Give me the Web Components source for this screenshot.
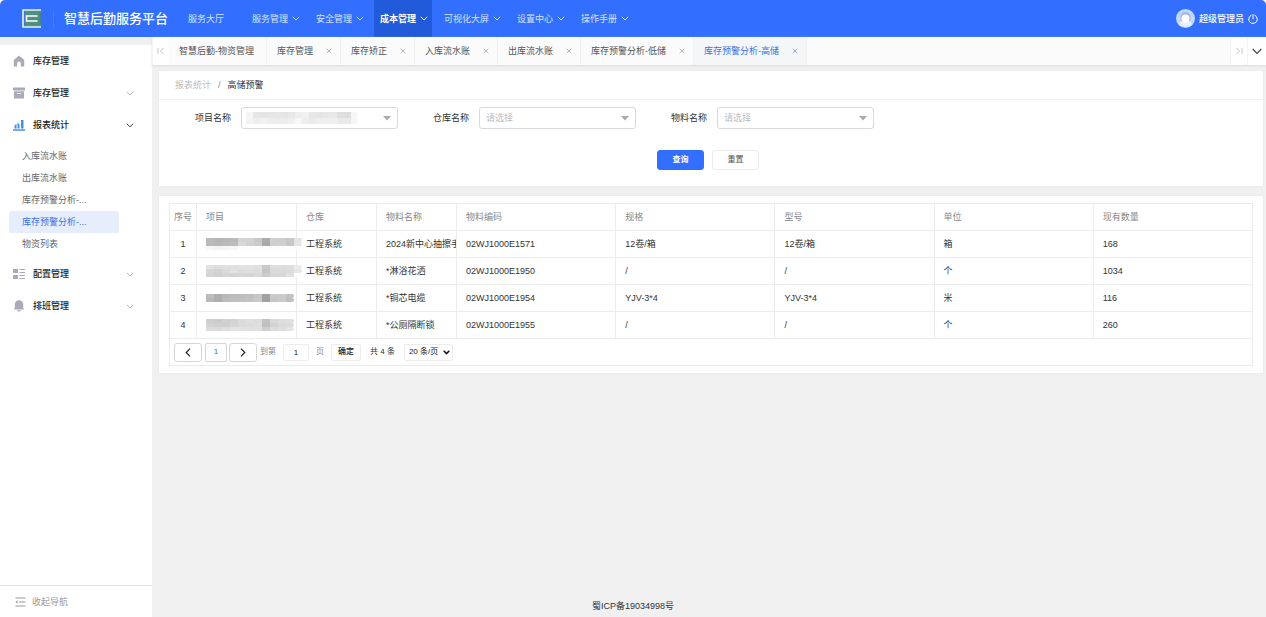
<!DOCTYPE html>
<html lang="zh-CN">
<head>
<meta charset="utf-8">
<title>智慧后勤服务平台</title>
<style>
    html, body {
        height: 100%;
    }

    body {
        margin: 0;
        background: #fff;
        color: #333;
        font: 9px/14px "Liberation Sans", "Noto Sans CJK SC", sans-serif;
    }
</style>
</head>
<body>

<app-shell>
    <app-header slot="header">
        <nav-item>服务大厅</nav-item>
        <nav-item arrow>服务管理</nav-item>
        <nav-item arrow>安全管理</nav-item>
        <nav-item arrow active>成本管理</nav-item>
        <nav-item arrow>可视化大屏</nav-item>
        <nav-item arrow>设置中心</nav-item>
        <nav-item arrow>操作手册</nav-item>
    </app-header>

    <side-nav slot="side">
        <side-item icon="home">库存管理</side-item>
        <side-item icon="box" arrow>库存管理</side-item>
        <side-item icon="chart" arrow open>报表统计
            <side-link slot="children">入库流水账</side-link>
            <side-link slot="children">出库流水账</side-link>
            <side-link slot="children">库存预警分析-...</side-link>
            <side-link slot="children" active>库存预警分析-...</side-link>
            <side-link slot="children">物资列表</side-link>
        </side-item>
        <side-item icon="grid" arrow>配置管理</side-item>
        <side-item icon="bell" arrow>排班管理</side-item>
    </side-nav>

    <page-tabs slot="tabs">
        <page-tab fixed>智慧后勤-物资管理</page-tab>
        <page-tab>库存管理</page-tab>
        <page-tab>库存矫正</page-tab>
        <page-tab>入库流水账</page-tab>
        <page-tab>出库流水账</page-tab>
        <page-tab>库存预警分析-低储</page-tab>
        <page-tab active>库存预警分析-高储</page-tab>
    </page-tabs>

    <panel-card>
        <bread-crumb parent="报表统计">高储预警</bread-crumb>
        <search-form>
            <form-field label="项目名称" placeholder="">
                <mosaic-bar rows="f5 e6 e4 e5 e6 e4 e8 ee f1 e7 e5 e7 e8 de dd f6|f3 ee f2 ee ec ec f0 f6 ed ea ee ef ef e9 ea f5"></mosaic-bar>
            </form-field>
            <form-field label="仓库名称" placeholder="请选择"></form-field>
            <form-field label="物料名称" placeholder="请选择"></form-field>
        </search-form>
    </panel-card>

    <panel-card>
        <stock-table></stock-table>
        <page-pager></page-pager>
    </panel-card>
</app-shell>

<script>
    // Base class: clones the markup into an open shadow root
    class BaseElement extends HTMLElement {
        constructor() {
            super();
            this.attachShadow({ mode: "open" });
        }

        connectedCallback() {
            const box = "<style>*{box-sizing:border-box} svg{display:block;fill:none;stroke:currentColor}</style>";
            this.shadowRoot.innerHTML = box + this.render();
        }
    }

    class AppShell extends BaseElement {
        render() {
            return `
                <style>
                    :host{
                        display: grid;
                        grid-template: auto 1fr / 152px minmax(0, 1fr);
                        min-height: 100vh;
                        background: #f0f0f0;
                    }

                    header{
                        grid-column: 1 / -1;
                        background: #fff;
                    }

                    aside{
                        display: grid;
                        grid-template-columns: minmax(0, 1fr);
                        padding-top: 8px;
                    }

                    .page{
                        display: flex;
                        flex-direction: column;
                    }

                    main{
                        display: flex;
                        flex-direction: column;
                        gap: 10px;
                        padding: 6px 3px 0 7px;
                    }

                    /* The record number is centred on the window, not on the content column */
                    footer{
                        margin-top: auto;
                        padding: 0 152px 4px 0;
                        text-align: center;
                    }
                </style>
                <header><slot name="header"></slot></header>
                <aside><slot name="side"></slot></aside>
                <div class="page">
                    <slot name="tabs"></slot>
                    <main><slot></slot></main>
                    <footer>蜀ICP备19034998号</footer>
                </div>
            `;
        }
    }

    class AppHeader extends BaseElement {
        render() {
            return `
                <style>
                    :host{
                        display: flex;
                        align-items: center;
                        height: 37px;
                        padding: 0 8px 0 22px;
                        background: #326fff;
                        border-radius: 5px 5px 0 0;
                        color: #fff;
                    }

                    h1{
                        margin: 0 14px 0 10px;
                        font-size: 13px;
                        line-height: 20px;
                        font-weight: 500;
                        white-space: nowrap;
                    }

                    .line{
                        width: 1px;
                        height: 18px;
                        margin-left: 12px;
                        background: #4179ff;
                    }

                    nav{
                        display: flex;
                        gap: 6px;
                        height: 100%;
                    }

                    .user{
                        display: flex;
                        align-items: center;
                        gap: 4px;
                        margin-left: auto;
                        font-weight: 500;
                    }

                    button{
                        padding: 0;
                        border: 0;
                        background: none;
                        color: inherit;
                    }
                </style>
                <svg width="19" height="19" viewBox="0 0 19 19">
                    <rect x="1" y="1" width="18" height="17" fill="#4f9080" stroke="none"/>
                    <path d="M19 1H1v17h18" stroke="#e8f4ee" stroke-width="1.600"/>
                    <path d="M2.500 2.500v14" stroke="#3f78c8"/>
                    <path d="M15.500 7H4.500v5H15.500" stroke="#fff" stroke-width="1.600"/>
                    <path d="M18.300 3.500v12" stroke="#3f7d9a"/>
                </svg>
                <span class="line"></span>
                <h1>智慧后勤服务平台</h1>
                <nav><slot></slot></nav>
                <div class="user">
                    <svg width="19" height="19" viewBox="0 0 19 19">
                        <circle cx="9.500" cy="9.500" r="9.500" fill="#c3d7fb" stroke="none"/>
                        <path d="M3 15q1-3 4-3h5q3 0 4 3a8.500 8.500 0 0 1-13 0z" fill="#e8f0ff" stroke="none"/>
                        <path d="M4.500 12V8a5 5 0 0 1 10 0v4z" fill="#9db8e6" stroke="none"/>
                        <circle cx="9.500" cy="9.500" r="4" fill="#fff" stroke="none"/>
                    </svg>
                    <span>超级管理员</span>
                    <button aria-label="退出">
                        <svg width="10" height="10" viewBox="0 0 10 10" stroke-linecap="round">
                            <path d="M3.200 1.200a4.300 4.300 0 1 0 3.600 0M5 .6v4.200"/>
                        </svg>
                    </button>
                </div>
            `;
        }
    }

    class NavItem extends BaseElement {
        render() {
            const arrow = `<svg width="8" height="5" viewBox="0 0 8 5"><path d="M.8.8L4 4 7.200.8"/></svg>`;
            return `
                <style>
                    :host{
                        display: flex;
                    }

                    a{
                        display: flex;
                        align-items: center;
                        gap: 4px;
                        min-width: 58px;
                        padding: 0 4px 0 6px;
                        color: #d6e2ff;
                        text-decoration: none;
                        white-space: nowrap;
                    }

                    :host([active]) a{
                        background: #225bd9;
                        color: #fff;
                        font-weight: 700;
                    }
                </style>
                <a href="#"><slot></slot>${this.hasAttribute("arrow") ? arrow : ""}</a>
            `;
        }
    }

    class SideNav extends BaseElement {
        render() {
            return `
                <style>
                    :host{
                        display: flex;
                        flex-direction: column;
                        background: #fff;
                    }

                    button{
                        display: flex;
                        align-items: center;
                        gap: 6px;
                        height: 32px;
                        margin-top: auto;
                        padding: 0 15px;
                        border: 0;
                        border-top: 1px solid #e3e3e3;
                        background: none;
                        color: #999;
                        font: inherit;
                    }
                </style>
                <slot></slot>
                <button>
                    <svg width="11" height="10" viewBox="0 0 11 10">
                        <path d="M.5 1h10M4 5h6.500M.5 9h10"/>
                        <path d="M2.500 3.200L.5 5l2 1.800z" fill="currentColor" stroke="none"/>
                    </svg>
                    收起导航
                </button>
            `;
        }
    }

    const sideIcons = {
        home: `<path d="M6 .5L.8 5v6.500h3.400V8.200a1.800 1.800 0 0 1 3.600 0v3.300h3.400V5z" fill="#a9abb8" stroke="none"/>`,
        box: `<path d="M0 .5h12v3H0zM1 4.200h10v7.300H1z" fill="#a9abb8" stroke="none"/><path d="M4 6.500h4" stroke="#fff"/>`,
        chart: `<path d="M0 11h12" stroke="#3e92e8" stroke-width="1.500"/><path d="M1.500 9.500V6.500l2-1.500v4.500zM4.500 9.500V3.500l2 2v4zM8 9.500V1h2.500v8.500z" fill="#3e92e8" stroke="none"/>`,
        grid: `<path d="M0 1h5v4H0zM0 7h5v4H0z" fill="#a9abb8" stroke="none"/><path d="M6.500 1.500H12M6.500 4.500H12M6.500 7.500H12M6.500 10.500H12" stroke="#a9abb8"/>`,
        bell: `<path d="M6 .3c-3 0-4.200 2.200-4.200 4.500V8L.6 9.600h10.800L10.200 8V4.800C10.200 2.500 9 .3 6 .3zM4 10.300h4q-.5 1.400-2 1.400t-2-1.400z" fill="#a9abb8" stroke="none"/>`
    };

    class SideItem extends BaseElement {
        render() {
            const arrow = `<svg class="arrow" width="8" height="5" viewBox="0 0 8 5"><path d="M.8.8L4 3.800 7.200.8"/></svg>`;
            return `
                <style>
                    :host{
                        display: block;
                    }

                    button{
                        display: flex;
                        align-items: center;
                        gap: 8px;
                        width: 100%;
                        height: 32px;
                        padding: 0 18px 0 13px;
                        border: 0;
                        background: none;
                        color: #222;
                        font: inherit;
                        font-weight: 500;
                    }

                    .arrow{
                        margin-left: auto;
                        color: #bbb;
                    }

                    :host([open]) .arrow{
                        color: #444;
                    }

                    .children{
                        display: none;
                    }

                    :host([open]) .children{
                        display: block;
                        padding: 4px 33px 3px 9px;
                    }
                </style>
                <button>
                    <svg width="12" height="12" viewBox="0 0 12 12">${sideIcons[this.getAttribute("icon")]}</svg>
                    <slot></slot>
                    ${this.hasAttribute("arrow") ? arrow : ""}
                </button>
                <div class="children"><slot name="children"></slot></div>
            `;
        }
    }

    class SideLink extends BaseElement {
        render() {
            return `
                <style>
                    a{
                        display: block;
                        padding: 4px 13px;
                        border-radius: 2px;
                        color: #666;
                        text-decoration: none;
                        white-space: nowrap;
                        overflow: hidden;
                        text-overflow: ellipsis;
                    }

                    :host([active]) a{
                        background: #e6eefe;
                        color: #3b6fe6;
                    }
                </style>
                <a href="#"><slot></slot></a>
            `;
        }
    }

    class PageTabs extends BaseElement {
        render() {
            return `
                <style>
                    :host{
                        display: flex;
                        height: 28px;
                        background: #fbfbfb;
                        box-shadow: 0 1px 2px #dcdcdc;
                    }

                    button{
                        display: grid;
                        place-items: center;
                        width: 17px;
                        padding: 0;
                        border: 0;
                        border-left: 1px solid #f4f4f4;
                        background: #fff;
                        color: #c4c4c4;
                    }

                    .end{
                        margin-left: auto;
                    }

                    .more{
                        width: 19px;
                        color: #444;
                    }
                </style>
                <button aria-label="向左"><svg width="8" height="8" viewBox="0 0 8 8"><path d="M1 1v6M6.500 1l-3 3 3 3"/></svg></button>
                <slot></slot>
                <button class="end" aria-label="向右"><svg width="8" height="8" viewBox="0 0 8 8"><path d="M7 1v6M1.500 1l3 3-3 3"/></svg></button>
                <button class="more" aria-label="更多"><svg width="10" height="7" viewBox="0 0 10 7"><path d="M.7 1L5 5.300 9.300 1" stroke-width="1.200"/></svg></button>
            `;
        }
    }

    class PageTab extends BaseElement {
        render() {
            const close = `<button aria-label="关闭"><svg width="6" height="6" viewBox="0 0 6 6"><path d="M.7.7l4.600 4.600M5.300.7L.7 5.300" stroke-width=".8"/></svg></button>`;
            return `
                <style>
                    :host{
                        display: flex;
                        align-items: center;
                        gap: 13px;
                        padding: 0 8px 0 10px;
                        border-right: 1px solid #f1f1f1;
                        color: #555;
                        white-space: nowrap;
                    }

                    :host([fixed]){
                        padding-right: 12px;
                    }

                    :host([active]){
                        background: #f5f6f8;
                        color: #3b6fe6;
                    }

                    button{
                        padding: 0;
                        border: 0;
                        background: none;
                        color: #aaa;
                    }

                    :host([active]) button{
                        color: #7d95de;
                    }
                </style>
                <slot></slot>
                ${this.hasAttribute("fixed") ? "" : close}
            `;
        }
    }

    class PanelCard extends BaseElement {
        render() {
            return `
                <style>
                    :host{
                        display: block;
                        background: #fff;
                        box-shadow: 0 0 2px #e2e2e2;
                    }
                </style>
                <slot></slot>
            `;
        }
    }

    class BreadCrumb extends BaseElement {
        render() {
            return `
                <style>
                    :host{
                        display: flex;
                        gap: 7px;
                        padding: 7px 16px;
                        border-bottom: 1px solid #f0f0f0;
                    }

                    a{
                        color: #bbb;
                        text-decoration: none;
                    }

                    .sep{
                        color: #888;
                    }
                </style>
                <a href="#">${this.getAttribute("parent")}</a>
                <span class="sep">/</span>
                <span><slot></slot></span>
            `;
        }
    }

    class SearchForm extends BaseElement {
        render() {
            return `
                <style>
                    form{
                        padding: 7px 36px 16px;
                    }

                    .fields{
                        display: flex;
                        flex-wrap: wrap;
                        gap: 10px 35px;
                    }

                    .actions{
                        display: flex;
                        justify-content: center;
                        gap: 8px;
                        margin-top: 21px;
                        padding-right: 6px;
                    }

                    button{
                        width: 47px;
                        height: 20px;
                        padding: 0;
                        border: 1px solid #ececec;
                        border-radius: 3px;
                        background: #fff;
                        color: #555;
                        font: inherit;
                        font-size: 8px;
                    }

                    .primary{
                        border-color: #326fff;
                        background: #326fff;
                        color: #fff;
                        font-weight: 700;
                    }
                </style>
                <form>
                    <div class="fields"><slot></slot></div>
                    <div class="actions">
                        <button type="button" class="primary">查询</button>
                        <button type="reset">重置</button>
                    </div>
                </form>
            `;
        }
    }

    class FormField extends BaseElement {
        render() {
            return `
                <style>
                    :host{
                        display: flex;
                        align-items: center;
                        gap: 10px;
                    }

                    .control{
                        display: grid;
                        align-items: center;
                        width: 157px;
                    }

                    .control > *{
                        grid-area: 1 / 1;
                    }

                    select{
                        appearance: none;
                        height: 22px;
                        padding: 0 6px;
                        border: 1px solid #d9d9d9;
                        border-radius: 3px;
                        background: #fff;
                        color: #bbb;
                        font: inherit;
                    }

                    svg{
                        justify-self: end;
                        margin-right: 7px;
                        color: #aaa;
                        pointer-events: none;
                    }

                    ::slotted(*){
                        grid-area: 1 / 1;
                        margin-left: 5px;
                        pointer-events: none;
                    }
                </style>
                <label for="field">${this.getAttribute("label")}</label>
                <div class="control">
                    <select id="field"><option>${this.getAttribute("placeholder")}</option></select>
                    <slot></slot>
                    <svg width="8" height="5" viewBox="0 0 8 5"><path d="M0 0h8L4 4.500z" fill="currentColor" stroke="none"/></svg>
                </div>
            `;
        }
    }

    // Pixelated strip that hides a private name, one grey hex pair per cell
    class MosaicBar extends BaseElement {
        render() {
            const rows = this.getAttribute("rows").split("|");
            return `
                <style>
                    :host{
                        display: block;
                    }

                    div{
                        display: flex;
                    }

                    i{
                        flex: none;
                        width: var(--cell-width, 7px);
                        height: var(--cell-height, 6px);
                    }

                    i:last-child{
                        border-radius: 0 4px 4px 0;
                    }
                </style>
                ${rows.map((row) => `<div>${row.split(" ").map((c) => `<i style="background:#${c}${c}${c}"></i>`).join("")}</div>`).join("")}
            `;
        }
    }

    const stock = [
        ["b9 b5 b7 ba d4 d2 c9 ab cf cd c8 e3|ba b8 bb bd d9 d0 cb a9 ce d0 c6 e5|f6 f3 f5 f8 fd fd fd fd fd fd fd fd", "工程系统", "2024新中心抽擦手纸", "02WJ1000E1571", "12卷/箱", "12卷/箱", "箱", "168"],
        ["e2 dd df e0 e3 e2 e0 c9 dd dc dd ea|d7 d3 da e3 dd e0 de c5 d9 da dc e6|d4 d0 d5 d4 d6 d4 d8 cc d6 d7 e0 fd", "工程系统", "*淋浴花洒", "02WJ1000E1950", "/", "/", "个", "1034"],
        ["bd ae b8 bc bd c0 c6 a2 c9 cb c2|b8 ae bc bf c0 c3 c9 a0 c6 ca bf", "工程系统", "*铜芯电缆", "02WJ1000E1954", "YJV-3*4", "YJV-3*4", "米", "116"],
        ["cf cb d0 d3 dc df dc c2 d9 de df|d3 d0 ce d6 db dc de bf d2 db dc|dc da de e2 e1 e0 e0 cf db df e3", "工程系统", "*公厕隔断锁", "02WJ1000E1955", "/", "/", "个", "260"]
    ];

    class StockTable extends BaseElement {
        render() {
            const heads = ["序号", "项目", "仓库", "物料名称", "物料编码", "规格", "型号", "单位", "现有数量"];
            return `
                <style>
                    :host{
                        display: block;
                        padding: 7px 10px 0;
                    }

                    table{
                        width: 100%;
                        table-layout: fixed;
                        border-collapse: collapse;
                    }

                    th, td{
                        height: 27px;
                        padding: 0 0 0 9px;
                        border: 1px solid #ececec;
                        font-weight: 400;
                        text-align: left;
                        white-space: nowrap;
                        overflow: hidden;
                    }

                    th{
                        color: #888;
                    }

                    th:first-child, td:first-child{
                        padding: 0;
                        text-align: center;
                    }

                    td.name{
                        overflow: visible;
                    }

                    mosaic-bar{
                        --cell-width: 8px;
                        --cell-height: 4px;
                    }
                </style>
                <table>
                    <colgroup>
                        <col style="width:27px"><col style="width:100px"><col style="width:80px"><col style="width:80px">
                        <col><col><col><col><col>
                    </colgroup>
                    <thead><tr>${heads.map((h) => `<th>${h}</th>`).join("")}</tr></thead>
                    <tbody>
                        ${stock.map(([name, ...cells], i) => `
                            <tr>
                                <td>${i + 1}</td>
                                <td class="name"><mosaic-bar rows="${name}"></mosaic-bar></td>
                                ${cells.map((c) => `<td>${c}</td>`).join("")}
                            </tr>
                        `).join("")}
                    </tbody>
                </table>
            `;
        }
    }

    class PagePager extends BaseElement {
        render() {
            return `
                <style>
                    :host{
                        display: block;
                        padding: 0 10px 7px;
                    }

                    .bar{
                        display: flex;
                        align-items: center;
                        height: 27px;
                        padding-left: 4px;
                        border: 1px solid #ececec;
                        border-top: 0;
                        color: #888;
                        font-size: 8px;
                    }

                    button, input, select{
                        height: 19px;
                        padding: 0;
                        border: 1px solid #ececec;
                        border-radius: 2px;
                        background: #fff;
                        color: #222;
                        font: inherit;
                        text-align: center;
                    }

                    .step{
                        display: grid;
                        place-items: center;
                        width: 28px;
                        border-color: #d6d6d6;
                        border-radius: 3px;
                    }

                    .current{
                        width: 22px;
                        margin: 0 2px 0 3px;
                        border-color: #d6d6d6;
                        color: #3b6fe6;
                    }

                    label{
                        display: flex;
                        align-items: center;
                        gap: 7px;
                        margin-left: 3px;
                    }

                    input{
                        width: 26px;
                        height: 17px;
                    }

                    .ok{
                        width: 30px;
                        height: 17px;
                        margin: 0 9px 0 7px;
                        font-weight: 500;
                    }

                    .total{
                        color: #333;
                    }

                    .size{
                        display: grid;
                        align-items: center;
                        margin-left: 9px;
                        color: #111;
                    }

                    .size > *{
                        grid-area: 1 / 1;
                    }

                    select{
                        appearance: none;
                        width: 49px;
                        height: 17px;
                        padding-left: 4px;
                        text-align: left;
                    }

                    .size svg{
                        justify-self: end;
                        margin-right: 3px;
                        pointer-events: none;
                    }
                </style>
                <div class="bar">
                    <button class="step" aria-label="上一页"><svg width="6" height="9" viewBox="0 0 6 9"><path d="M5 .7L1.200 4.500 5 8.300" stroke-width="1.200"/></svg></button>
                    <button class="current">1</button>
                    <button class="step" aria-label="下一页"><svg width="6" height="9" viewBox="0 0 6 9"><path d="M1 .7l3.800 3.800L1 8.300" stroke-width="1.200"/></svg></button>
                    <label>到第 <input value="1"> 页</label>
                    <button class="ok">确定</button>
                    <span class="total">共 4 条</span>
                    <span class="size">
                        <select aria-label="每页条数"><option>20 条/页</option></select>
                        <svg width="7" height="5" viewBox="0 0 7 5"><path d="M.7.8l2.800 2.800L6.300.8" stroke-width="1.500"/></svg>
                    </span>
                </div>
            `;
        }
    }

    customElements.define("app-shell", AppShell);
    customElements.define("app-header", AppHeader);
    customElements.define("nav-item", NavItem);
    customElements.define("side-nav", SideNav);
    customElements.define("side-item", SideItem);
    customElements.define("side-link", SideLink);
    customElements.define("page-tabs", PageTabs);
    customElements.define("page-tab", PageTab);
    customElements.define("panel-card", PanelCard);
    customElements.define("bread-crumb", BreadCrumb);
    customElements.define("search-form", SearchForm);
    customElements.define("form-field", FormField);
    customElements.define("mosaic-bar", MosaicBar);
    customElements.define("stock-table", StockTable);
    customElements.define("page-pager", PagePager);
</script>
</body>
</html>
